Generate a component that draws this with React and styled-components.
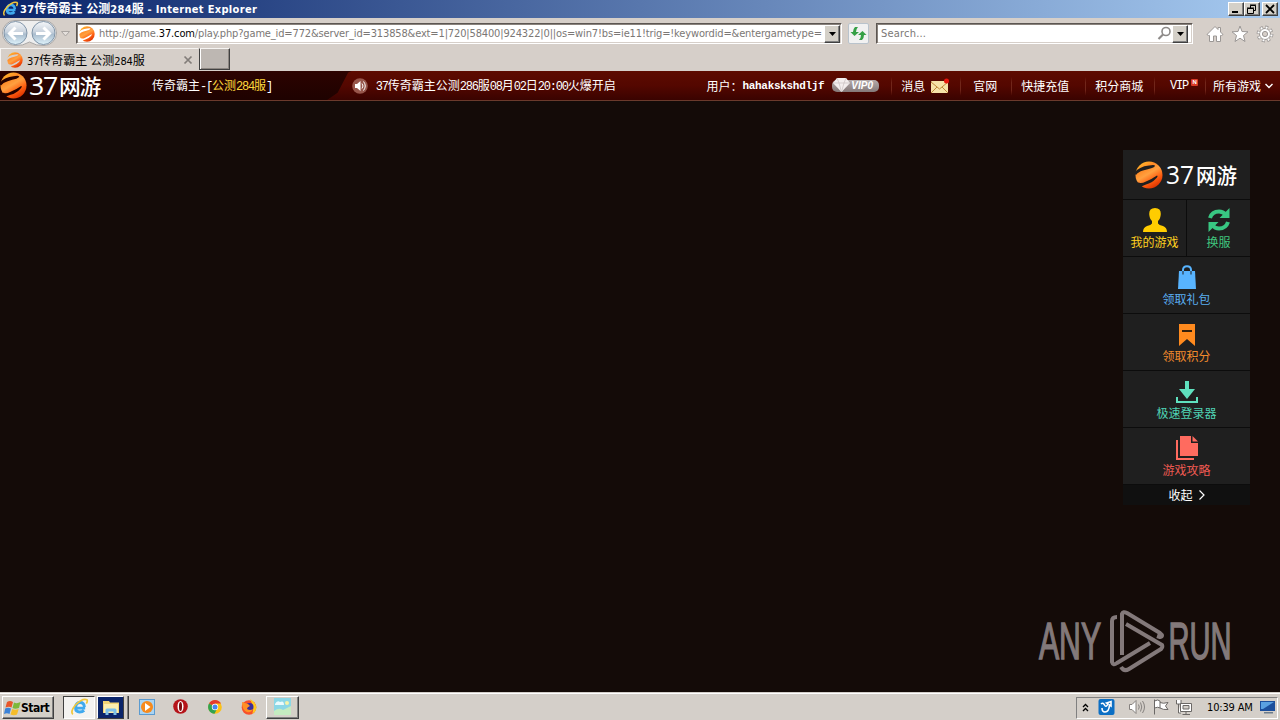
import React from "react";
import styled, { createGlobalStyle, css } from "styled-components";

const tahoma = `"DejaVu Sans Condensed", "Noto Sans CJK SC", sans-serif`;
const simsun = `"Liberation Mono", "Noto Sans CJK SC", monospace`;

const GlobalStyle = createGlobalStyle`
  * {
    box-sizing: border-box;
  }

  body {
    margin: 0;
    background-color: #140b08;
    overflow: hidden;
  }

  svg {
    display: block;
    flex: none;
    overflow: visible;
  }
`;

const Screen = styled.div`
  width: 1280px;
  height: 720px;
  display: flex;
  flex-direction: column;
  font-family: ${tahoma};
  font-size: 11px;
  white-space: pre;
`;

const Cjk = styled.span`
  font-family: "Noto Sans CJK SC", sans-serif;
  font-size: 12px;
  letter-spacing: 0;
`;

// latin text keeps the parent's font, chinese runs are always 12px wide per glyph
const Mixed = ({ text }) =>
  text
    .split(/([\u3000-\u9fff\uff00-\uffef]+)/)
    .map((part, i) => (i % 2 ? <Cjk key={i}>{part}</Cjk> : part));

const raised = css`
  background-color: #d4d0c8;
  border: 1px solid;
  border-color: #ffffff #404040 #404040 #ffffff;
  box-shadow: inset -1px -1px 0 #808080;
`;

/* ---------- window ---------- */

const TitleBar = styled.header`
  height: 18px;
  display: flex;
  align-items: center;
  padding: 0 2px;
  background: linear-gradient(90deg, #0a246a, #a6caf0);
`;

const TitleText = styled.div`
  flex: 1;
  margin-left: 2px;
  color: #ffffff;
  font-weight: bold;
  line-height: 18px;
  letter-spacing: 0.32px;
`;

const WindowButton = styled.button`
  ${raised}
  width: 16px;
  height: 14px;
  padding: 0;
  display: flex;
  align-items: center;
  justify-content: center;
  margin-left: ${(props) => props.$gap || 0}px;
`;

const Toolbar = styled.div`
  height: 30px;
  display: flex;
  align-items: center;
  background-color: #d6cfc9;
`;

const NavButtons = styled.div`
  width: 76px;
  height: 30px;
`;

const Field = styled.div`
  width: ${(props) => props.$width}px;
  height: 21px;
  margin-top: 1px;
  display: flex;
  align-items: center;
  background-color: #ffffff;
  border: 1px solid;
  border-color: #5c5652 #ffffff #ffffff #5c5652;
  box-shadow: inset 1px 1px 0 #89827c, inset -1px -1px 0 #d6cfc9;
  padding: 0 ${(props) => props.$pad}px 0 2px;
  color: #7b7775;
`;

const Url = styled.div`
  flex: 1;
  min-width: 0;
  margin-left: 4px;
  line-height: 19px;
  letter-spacing: -0.145px;

  b {
    color: #000000;
    font-weight: normal;
  }
`;

const SearchText = styled.div`
  flex: 1;
  margin-left: 2px;
  line-height: 19px;
  letter-spacing: 0.2px;
`;

const DropButton = styled.button`
  ${raised}
  width: 16px;
  height: 18px;
  padding: 0;
  display: flex;
  align-items: center;
  justify-content: center;
`;

const RefreshButton = styled.button`
  width: 21px;
  height: 21px;
  margin: 1px 7px 0 6px;
  padding: 0;
  display: flex;
  align-items: center;
  justify-content: center;
  background-color: #f1f1f1;
  border: 1px solid #b9c3cc;
  border-radius: 2px;
`;

const ToolIcons = styled.div`
  display: flex;
  gap: 7px;
  margin: 2px 0 0 13px;
`;

const TabRow = styled.div`
  height: 23px;
  display: flex;
  background-color: #d6cfc9;
`;

const Tab = styled.div`
  width: 199px;
  height: 23px;
  display: flex;
  align-items: center;
  padding: 0 6px;
  border: 1px solid;
  border-color: #f6f4f2 transparent transparent #f6f4f2;
`;

const TabText = styled.div`
  flex: 1;
  margin-left: 4px;
  color: #000000;
  letter-spacing: -0.15px;
`;

const NewTab = styled.div`
  width: 31px;
  height: 22px;
  background-color: #bdb7b2;
  border: 1px solid;
  border-color: #f6f4f2 #404040 #404040 #404040;
  box-shadow: inset 1px 0 0 #ffffff, inset -1px -1px 0 #8c8681;
`;

/* ---------- game bar ---------- */

const GameBar = styled.nav`
  height: 30px;
  display: flex;
  align-items: center;
  flex: none;
  background: linear-gradient(#5d0b00, #540700 50%, #3a0300);
  border-bottom: 1px solid #6b3a2c;
  box-shadow: 0 1px 0 #000000;
  font-family: ${simsun};
  font-size: 12px;
  letter-spacing: -1.2px;
  line-height: 28px;
  color: #ffffff;
`;

const Brand = styled.div`
  width: 352px;
  height: 29px;
  display: flex;
  align-items: center;
  background: linear-gradient(#2c0300, #1e0200);
  clip-path: polygon(0 0, 100% 0, 99% 5%, 96% 75%, 93% 100%, 0 100%);
`;

const ServerName = styled.div`
  margin-left: 50px;

  em {
    font-style: normal;
    color: #ffd93c;
  }
`;

const Notice = styled.div`
  width: 331px;
  margin-left: 8px;
`;

const User = styled.div`
  width: 126px;
  display: flex;

  b {
    font-size: 11px;
    letter-spacing: -0.3px;
  }
`;

const VipBadge = styled.div`
  width: 47px;
  height: 12px;
  margin-right: 12px;
  display: flex;
  align-items: center;
  border-radius: 5px;
  background: linear-gradient(#b5abab, #847878);
  font: italic bold 10px/12px "Liberation Sans", sans-serif;
  letter-spacing: 0;

  svg {
    margin: -2px 1px 0 1px;
  }
`;

const MenuItem = styled.a`
  width: ${(props) => props.$width}px;
  height: 29px;
  display: flex;
  align-items: center;
  padding-left: ${(props) => props.$left}px;
  background: linear-gradient(transparent 20%, #71261a 40%, #71261a 65%, transparent 85%) left / 1px 100% no-repeat;
`;

const NewMark = styled.i`
  width: 7px;
  height: 7px;
  margin: -7px 0 0 3px;
  border-radius: 1px;
  background-color: #d93a26;
  font: bold 6px/7px "Liberation Sans", sans-serif;
  letter-spacing: 0;
  text-align: center;
`;

/* ---------- page ---------- */

const Page = styled.main`
  position: relative;
  flex: 1;
  background-color: #140b08;
`;

const SidePanel = styled.aside`
  position: absolute;
  top: 49px;
  left: 1123px;
  width: 127px;
  display: flex;
  flex-wrap: wrap;
  gap: 1px;
  background-color: #0c0c0c;
`;

const PanelHead = styled.div`
  width: 127px;
  height: 49px;
  display: flex;
  align-items: center;
  padding-left: 12px;
  background-color: #1f1f1f;
`;

const PanelCell = styled.a`
  width: ${(props) => props.$width || 127}px;
  height: 56px;
  display: flex;
  flex-direction: column;
  align-items: center;
  justify-content: flex-end;
  padding-bottom: 5px;
  background-color: #1f1f1f;
  color: ${(props) => props.$color};
  line-height: 18px;

  svg {
    margin-bottom: 1px;
  }
`;

const Collapse = styled.div`
  width: 127px;
  height: 20px;
  display: flex;
  align-items: center;
  justify-content: center;
  gap: 6px;
  background-color: #101010;
  color: #ffffff;
  line-height: 18px;
`;

const Watermark = styled.svg`
  position: absolute;
  left: 1036px;
  top: 504px;
`;

/* ---------- taskbar ---------- */

const Taskbar = styled.footer`
  height: 28px;
  display: flex;
  align-items: center;
  padding: 2px 2px 0;
  background-color: #d4cfc9;
  border-top: 1px solid #d4cfc9;
  box-shadow: inset 0 1px 0 #ffffff;
`;

const StartButton = styled.button`
  ${raised}
  width: 52px;
  height: 23px;
  margin-right: 9px;
  display: flex;
  align-items: center;
  padding: 0 0 0 1px;
  font: bold 12px ${tahoma};
  letter-spacing: -0.5px;
  color: #000000;
`;

const Task = styled.div`
  width: ${(props) => props.$width}px;
  height: 23px;
  display: flex;
  align-items: center;
  justify-content: center;
  padding-bottom: 2px;
  ${(props) => props.$raised && raised}
  ${(props) =>
    props.$active &&
    css`
      background-color: #f4f3f1;
      border: 1px solid;
      border-color: #404040 #ffffff #ffffff #404040;
    `}
`;

const Stack = styled.div`
  width: 32px;
  height: 23px;
  margin-left: 2px;
  padding-right: 4px;
  background-color: #d4cfc9;
  border-right: 1px solid #404040;
  box-shadow: inset -1px 0 0 #808080;

  div {
    height: 23px;
    display: flex;
    align-items: center;
    justify-content: center;
    background-color: #0a246a;
    border: 1px solid;
    border-color: #ffffff #404040 #404040 #ffffff;
  }
`;

const Tray = styled.div`
  width: 202px;
  height: 22px;
  margin-left: auto;
  display: flex;
  align-items: center;
  padding: 0 1px 1px 5px;
  border: 1px solid;
  border-color: #808080 #ffffff #ffffff #808080;
`;

const Clock = styled.div`
  width: 55px;
  margin-left: 12px;
  color: #000000;
  letter-spacing: -0.15px;
`;

/* ---------- drawings ---------- */

const Ball = ({ size, id }) => (
  <svg width={size} height={size} viewBox="0 0 28 28">
    <defs>
      <linearGradient id={id} x1="0.1" y1="0" x2="0.7" y2="1">
        <stop offset="0" stopColor="#ffc629" />
        <stop offset="0.3" stopColor="#ff8a26" />
        <stop offset="0.5" stopColor="#ffa040" />
        <stop offset="0.75" stopColor="#ff5e10" />
        <stop offset="1" stopColor="#d93000" />
      </linearGradient>
      <mask id={`${id}-cut`}>
        <rect width="28" height="28" fill="#fff" />
        <path d="M-1 12Q4 5.500 14 4.500Q19 3.500 20 4.500Q20 6 17 7Q13 8 8 9.500Q3 11 1 14Z" fill="#000" />
        <path d="M4 21.500Q6 23 11 20.500Q17 18 22 14.500Q23.500 15 21 17.500Q17 22 11 23.500Q7 24.500 5 27L1 22Z" fill="#000" />
      </mask>
    </defs>
    <circle cx="14" cy="14" r="13.500" fill={`url(#${id})`} mask={`url(#${id}-cut)`} />
  </svg>
);

const Logo = ({ id, size, width, wordX }) => (
  <svg width={width} height="30" viewBox={`0 0 ${width} 30`}>
    <g transform="translate(0 1)">
      <Ball size={size} id={id} />
    </g>
    <text x={wordX} y="23.500" fill="#fff" fontFamily="Open Sans, sans-serif" fontSize="25" fontWeight="500" textLength="28" lengthAdjust="spacingAndGlyphs">37</text>
    <text x={wordX + 30} y="22.500" fill="#fff" fontFamily="Noto Sans CJK SC, sans-serif" fontWeight="500" fontSize="21" textLength="41" lengthAdjust="spacingAndGlyphs">网游</text>
  </svg>
);

const IeIcon = ({ size }) => (
  <svg width={size} height={size} viewBox="0 0 16 16" fill="none">
    <path d="M13.500 9H5Q5 12.500 8.500 12.500Q11 12.500 12.500 11M5 8Q5.500 4 9 4Q12.500 4 12.800 8" stroke="#3fa9ee" strokeWidth="2.600" />
    <path d="M2.500 14.500Q0 12 5 6Q11 0 15 1.500Q16 2.500 14.500 5" stroke="#f0c63c" strokeWidth="1.500" />
  </svg>
);

const Arrow = () => (
  <svg width="7" height="4" viewBox="0 0 7 4">
    <path d="M0 0H7L3.500 4Z" />
  </svg>
);

const NavIcon = () => (
  <svg width="76" height="30" viewBox="0 0 76 30">
    <defs>
      <linearGradient id="nav" x1="0" y1="0" x2="0" y2="1">
        <stop offset="0" stopColor="#f5f7f9" />
        <stop offset="0.45" stopColor="#c9d3de" />
        <stop offset="0.55" stopColor="#a9bccd" />
        <stop offset="1" stopColor="#dff3fb" />
      </linearGradient>
    </defs>
    <path d="M15 2.500H44A12 12 0 0 1 44 27.500Q36 28 29.500 24Q23 28 15 27.500A12 12 0 0 1 15 2.500Z" fill="#eeeeee" stroke="#a9a7a6" />
    <circle cx="15.500" cy="15" r="11.500" fill="url(#nav)" stroke="#8094a8" />
    <circle cx="43.500" cy="15" r="11.500" fill="url(#nav)" stroke="#8094a8" />
    <g fill="none" stroke="#fff" strokeWidth="3">
      <path d="M23 15.500H10M15.500 9.500L9.500 15.500L15.500 21.500" />
      <path d="M36 15.500H49M43.500 9.500L49.500 15.500L43.500 21.500" />
    </g>
    <path d="M61.500 13.500H69.500L65.500 18Z" fill="#e5e0dc" stroke="#aaa5a2" />
  </svg>
);

const Speaker = () => (
  <svg width="16" height="16" viewBox="0 0 16 16">
    <circle cx="8" cy="8" r="7.800" fill="#97564b" />
    <path d="M3 6H5L8.500 3V13L5 10H3Z" fill="#fff" />
    <path d="M10 5.500Q12 8 10 10.500M11.500 3.500Q15 8 11.500 12.500" fill="none" stroke="#fff" />
  </svg>
);

const items = [
  {
    name: "我的游戏",
    color: "#ffd21f",
    width: 63,
    icon: (
      <svg width="24" height="24" viewBox="0 0 24 24" fill="#ffcc00">
        <path d="M12 0Q18 0 17.800 6Q17.500 11 15 13V15.500Q16 17 20 18Q24 19.500 24 24H0Q0 19.500 4 18Q8 17 9 15.500V13Q6.500 11 6.200 6Q6 0 12 0Z" />
      </svg>
    ),
  },
  {
    name: "换服",
    color: "#3fc57e",
    width: 63,
    icon: (
      <svg width="24" height="24" viewBox="0 0 24 24">
        <g fill="none" stroke="#38c782" strokeWidth="4">
          <path d="M3 10Q5 3.500 12 3.500Q16 3.500 19 7" />
          <path d="M21 14Q19 20.500 12 20.500Q8 20.500 5 17" />
        </g>
        <path d="M22.500 0V10H12.500ZM1.500 24V14H11.500Z" fill="#38c782" />
      </svg>
    ),
  },
  {
    name: "领取礼包",
    color: "#5aaef0",
    icon: (
      <svg width="20" height="24" viewBox="0 0 20 24">
        <path d="M2 6H18L19 24H1Z" fill="#58b4ff" />
        <path d="M6 9V5Q6 1.200 10 1.200Q14 1.200 14 5V9" fill="none" stroke="#58b4ff" strokeWidth="2" />
        <path d="M6 6V9.500M14 6V9.500" stroke="#1f1f1f" />
      </svg>
    ),
  },
  {
    name: "领取积分",
    color: "#f08a2c",
    icon: (
      <svg width="16" height="22" viewBox="0 0 16 22">
        <path d="M0 0H16V22L8 15L0 22Z" fill="#ff8a1e" />
        <path d="M3 7H13" stroke="#33200e" strokeWidth="2" />
      </svg>
    ),
  },
  {
    name: "极速登录器",
    color: "#4fd3b4",
    icon: (
      <svg width="22" height="22" viewBox="0 0 22 22" fill="#5fe0be">
        <path d="M9 0H13V8H19L11 18L3 8H9Z" />
        <path d="M0 16H2V20H20V16H22V22H0Z" />
      </svg>
    ),
  },
  {
    name: "游戏攻略",
    color: "#ee5a52",
    icon: (
      <svg width="22" height="24" viewBox="0 0 22 24" fill="#ff6b5f">
        <path d="M4 0H15V7H22V20H4Z" />
        <path d="M16.500 0L22 5.500H16.500Z" />
        <path d="M0 4H2V22H18V24H0Z" />
      </svg>
    ),
  },
];

const menu = [
  { name: "官网", width: 51, left: 13 },
  { name: "快捷充值", width: 74, left: 10 },
  { name: "积分商城", width: 69, left: 10 },
];

export default function App() {
  return (
    <Screen>
      <GlobalStyle />
      <TitleBar>
        <IeIcon size={16} />
        <TitleText>
          <Mixed text="37传奇霸主 公测284服 - Internet Explorer" />
        </TitleText>
        <WindowButton>
          <svg width="10" height="10"><path d="M1 8H7" stroke="#000" strokeWidth="2" /></svg>
        </WindowButton>
        <WindowButton>
          <svg width="10" height="10" fill="none" stroke="#000">
            <path d="M3.500 4V1.500H8.500V6.500H7M3 1H9M.5 4.500H6.500V9.500H.5ZM0 4H7" />
          </svg>
        </WindowButton>
        <WindowButton $gap={2}>
          <svg width="10" height="8"><path d="M1 0L9 8M9 0L1 8" stroke="#000" strokeWidth="1.800" /></svg>
        </WindowButton>
      </TitleBar>

      <Toolbar>
        <NavButtons><NavIcon /></NavButtons>
        <Field $width={766} $pad={1}>
          <Ball size={16} id="ball-url" />
          <Url>
            http://game.<b>37.com</b>/play.php?game_id=772&amp;server_id=313858&amp;ext=1|720|58400|924322|0||os=win7!bs=ie11!trig=!keywordid=&amp;entergametype=
          </Url>
          <DropButton><Arrow /></DropButton>
        </Field>
        <RefreshButton>
          <svg width="17" height="15" viewBox="0 0 17 15" fill="#35a045">
            <path d="M5 1H8Q6 3 6 6H9L4.500 10L.5 6H3Q3 3 5 1Z" />
            <path d="M12 14H9Q11 12 11 9H8L12.500 5L16.500 9H14Q14 12 12 14Z" />
          </svg>
        </RefreshButton>
        <Field $width={317} $pad={4}>
          <SearchText>Search...</SearchText>
          <svg width="15" height="15" viewBox="0 0 15 15" fill="none" stroke="#8d8a88">
            <circle cx="9" cy="5.500" r="4" strokeWidth="1.600" />
            <path d="M6 8.500L1.500 13" strokeWidth="2.200" />
          </svg>
          <DropButton><Arrow /></DropButton>
        </Field>
        <ToolIcons>
          <svg width="18" height="18" viewBox="0 0 18 18" fill="#fff" stroke="#9b9795">
            <path d="M9 1.500L1 9.500L2.500 10.500H3.500V16.500H7.500V11H10.500V16.500H14.500V10.500H15.500L17 9.500L14.500 7V2.500H12V4.500Z" />
          </svg>
          <svg width="18" height="18" viewBox="0 0 18 18" fill="#fff" stroke="#9b9795">
            <path d="M9 1L11 6.500L17 6.800L12.500 10.500L14 16.500L9 13.200L4 16.500L5.500 10.500L1 6.800L7 6.500Z" />
          </svg>
          <svg width="18" height="18" viewBox="0 0 18 18">
            <circle cx="9" cy="9" r="6.800" fill="none" stroke="#9b9795" strokeWidth="3.200" strokeDasharray="3 2.340" />
            <circle cx="9" cy="9" r="5.500" fill="#fff" stroke="#9b9795" />
            <circle cx="9" cy="9" r="6.600" fill="none" stroke="#fff" strokeWidth="2" strokeDasharray="1.840 3.340" strokeDashoffset="-.5" />
            <circle cx="9" cy="9" r="2.600" fill="#d6cfc9" stroke="#9b9795" />
          </svg>
        </ToolIcons>
      </Toolbar>

      <TabRow>
        <Tab>
          <Ball size={16} id="ball-tab" />
          <TabText>
            <Mixed text="37传奇霸主 公测284服" />
          </TabText>
          <svg width="8" height="8"><path d="M.5 .5L7.500 7.500M7.500 .5L.5 7.500" stroke="#827d79" strokeWidth="1.700" /></svg>
        </Tab>
        <NewTab />
      </TabRow>

      <GameBar>
        <Brand>
          <Logo id="ball-bar" size={27} width={102} wordX={29} />
          <ServerName>
            <Mixed text="传奇霸主-[" />
            <em><Mixed text="公测284服" /></em>]
          </ServerName>
        </Brand>
        <Speaker />
        <Notice>
          <Mixed text="37传奇霸主公测286服08月02日20:00火爆开启" />
        </Notice>
        <User>
          <Mixed text="用户：" />
          <b>hahakskshdljf</b>
        </User>
        <VipBadge>
          <svg width="17" height="14" viewBox="0 0 17 14">
            <path d="M4 0H13L17 5L8.500 14L0 5Z" fill="#f3eeee" />
            <path d="M0 5H17M4 0L6 5L8.500 14L11 5L13 0" stroke="#c9bfbf" fill="none" strokeWidth=".7" />
          </svg>
          VIP0
        </VipBadge>
        <MenuItem $width={69} $left={10}>
          <Mixed text="消息" />
          <svg width="24" height="16" viewBox="0 0 24 16">
            <rect x="6" y="3" width="17" height="12" rx="1" fill="#f7e3a8" />
            <path d="M6 4L14.500 11L23 4M6 15L12 9M23 15L17 9" fill="none" stroke="#c08a3c" />
            <circle cx="21.500" cy="3" r="2.500" fill="#e8150c" />
          </svg>
        </MenuItem>
        {menu.map((item) => (
          <MenuItem key={item.name} $width={item.width} $left={item.left}>
            <Mixed text={item.name} />
          </MenuItem>
        ))}
        <MenuItem $width={51} $left={16}>
          VIP<NewMark>N</NewMark>
        </MenuItem>
        <MenuItem $width={75} $left={8}>
          <Mixed text="所有游戏" />
          <svg width="12" height="6" viewBox="0 0 12 6">
            <path d="M4.500 1L8 4.500L11.500 1" fill="none" stroke="#fff" strokeWidth="1.400" />
          </svg>
        </MenuItem>
      </GameBar>

      <Page>
        <SidePanel>
          <PanelHead>
            <Logo id="ball-panel" size={28} width={106} wordX={31} />
          </PanelHead>
          {items.map((item) => (
            <PanelCell key={item.name} $width={item.width} $color={item.color}>
              {item.icon}
              <Cjk>{item.name}</Cjk>
            </PanelCell>
          ))}
          <Collapse>
            <Cjk>收起</Cjk>
            <svg width="6" height="10"><path d="M.5 .5L5 5L.5 9.500" fill="none" stroke="#fff" strokeWidth="1.200" /></svg>
          </Collapse>
        </SidePanel>
        <Watermark width="200" height="76" viewBox="0 0 200 76">
          <g fill="#83797a" stroke="#83797a" strokeWidth="1.500" fontFamily="Liberation Sans, sans-serif" fontSize="52">
            <text x="3" y="54" textLength="62" lengthAdjust="spacingAndGlyphs">ANY</text>
            <text x="132.500" y="54" textLength="63" lengthAdjust="spacingAndGlyphs">RUN</text>
          </g>
          <g fill="none" stroke="#83797a" strokeWidth="4" strokeLinejoin="round">
            <path d="M81 12Q76 12 76 16V57Q77 61 81 58L114 38" />
            <path d="M86 50V9Q87 6 91 8L124 28Q128 31 124 32L121 31" />
            <path d="M90 19L126 40Q127 42 125 44L93 64Q88 67 85 62" />
          </g>
        </Watermark>
      </Page>

      <Taskbar>
        <StartButton>
          <svg width="17" height="16" viewBox="0 0 17 16">
            <path d="M3 2Q6 0 9 2L7.500 7.500Q5 6 1.500 7.500Z" fill="#e8562a" />
            <path d="M10 2.500Q13 4 16.500 2L15 8Q11 9.500 8.500 8Z" fill="#7db83a" />
            <path d="M1.200 8.500Q4 7 7 8.500L5.500 14Q3 12.500 0 14Z" fill="#3a82d8" />
            <path d="M8.200 9Q11 10.500 14.700 9L13 14.500Q10 16 6.500 14.500Z" fill="#f5bd2a" />
          </svg>
          Start
        </StartButton>
        <Task $width={32} $active><IeIcon size={18} /></Task>
        <Stack>
          <div>
            <svg width="18" height="17" viewBox="0 0 18 17">
              <path d="M1 2H7L8 3.500H17V14H1Z" fill="#f0d375" />
              <path d="M2 5H16V14H2Z" fill="#fbeeb0" />
              <path d="M3.500 16V11Q3.500 9.500 5 9.500H13Q14.500 9.500 14.500 11V16H11.500V12.500H6.500V16Z" fill="#7cc0ea" />
            </svg>
          </div>
        </Stack>
        <Task $width={36}>
          <svg width="16" height="16" viewBox="0 0 16 16">
            <rect x=".5" y=".5" width="15" height="15" fill="#aad4f2" stroke="#5b9bd0" />
            <circle cx="8" cy="8" r="6" fill="#f78a1c" />
            <path d="M6 4L11.500 8L6 12Z" fill="#fff" />
          </svg>
        </Task>
        <Task $width={31}>
          <svg width="15" height="15" viewBox="0 0 15 15">
            <circle cx="7.500" cy="7.500" r="7.300" fill="#b5141a" />
            <ellipse cx="7.500" cy="7.500" rx="3" ry="5.500" fill="#fff" />
            <ellipse cx="7.500" cy="7.500" rx="1.500" ry="4.600" fill="#7c0c10" />
          </svg>
        </Task>
        <Task $width={37}>
          <svg width="14" height="14" viewBox="0 0 14 14">
            <circle cx="7" cy="7" r="6.800" fill="#fbc116" />
            <path d="M7 7L1 3.600A6.800 6.800 0 0 1 13 3.600H7Z" fill="#e33b2e" />
            <path d="M7 7L1 3.600A6.800 6.800 0 0 0 6.500 13.800L9.500 8Z" fill="#31a350" />
            <circle cx="7" cy="7" r="3.200" fill="#fff" />
            <circle cx="7" cy="7" r="2.500" fill="#4587f0" />
          </svg>
        </Task>
        <Task $width={32}>
          <svg width="16" height="16" viewBox="0 0 16 16">
            <circle cx="8" cy="8.500" r="7.300" fill="#f8502a" />
            <path d="M9 0Q16 4 15.300 9Q15 13 11 15Q14 9 9 0Z" fill="#ffc91f" />
            <circle cx="8.500" cy="8" r="4" fill="#3b2f9c" />
            <path d="M1 3Q4 4 7 5L9 7Q6 8 6 10Q9 12 12 10Q10 14 6 13Q1 11 1 3Z" fill="#ff9124" />
          </svg>
        </Task>
        <Task $width={1} />
        <Task $raised $width={33}>
          <svg width="17" height="17" viewBox="0 0 17 17">
            <rect width="17" height="17" fill="#8bd7e6" />
            <path d="M0 17V13Q5 9 9 12L17 8V17Z" fill="#c4ebc0" />
            <path d="M1 6Q3 2 6 4Q10 2 10 7H1Z" fill="#eafafc" />
            <circle cx="13" cy="5" r="2" fill="#f5f3a8" />
          </svg>
        </Task>
        <Tray>
          <svg width="7" height="9" viewBox="0 0 7 9" fill="none" stroke="#000" strokeWidth="1.300">
            <path d="M1 4L3.500 1.500L6 4M1 8L3.500 5.500L6 8" />
          </svg>
          <svg width="26" height="16" viewBox="0 0 26 16">
            <rect x="9.500" width="16" height="16" rx="2" fill="#0c6fc4" />
            <path d="M12 5Q14 3 15.500 6Q17 9 19 5L17.500 4L22 2.500V7L20.500 6Q20 13 16 13Q13 13 13 9" fill="none" stroke="#fff" strokeWidth="1.600" />
          </svg>
          <svg width="31" height="16" viewBox="0 0 31 16" fill="none" stroke="#85817e">
            <path d="M14.500 5.500H17L21 1.500V14.500L17 10.500H14.500Z" fill="#fff" />
            <path d="M23.500 5.500Q25 8 23.500 10.500M25.500 3.500Q28 8 25.500 12.500M27.500 2Q31.500 8 27.500 14" />
          </svg>
          <svg width="24" height="16" viewBox="0 0 24 16" fill="#fff" stroke="#6b6866">
            <path d="M8.500 15.500V.5M8.500 2Q12 0 14 2V9Q12 7.500 8.500 9M14 3.500Q17 5 22 3.500L19.500 7L22 10.500Q17 11 14 9" />
          </svg>
          <svg width="25" height="16" viewBox="0 0 25 16" fill="#fff" stroke="#6b6866">
            <path d="M10.500 4.500H21.500V12.500H10.500ZM12.500 15.500H20M16 12.500V15M6.500 1V5H11V1M8.500 5V14H11" />
            <path d="M13 6.500H19V10H13Z" fill="#d4cfc9" />
          </svg>
          <Clock>10:39 AM</Clock>
          <svg width="16" height="14" viewBox="0 0 16 14">
            <path d="M0 1H15V11H0Z" fill="#1c4f9c" />
            <path d="M1 2H14L3 9H1Z" fill="#5aa0e0" />
            <path d="M4 12H13V13.500H4Z" fill="#6c7c8c" />
          </svg>
        </Tray>
      </Taskbar>
    </Screen>
  );
}
